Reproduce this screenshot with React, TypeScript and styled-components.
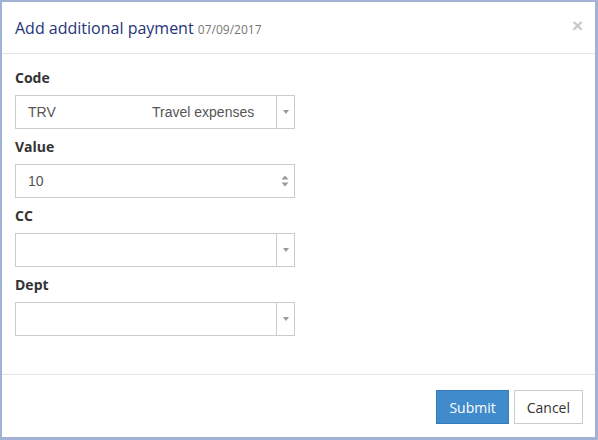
import React from 'react';
import styled, { createGlobalStyle } from 'styled-components';

const GlobalStyle = createGlobalStyle`
  * { box-sizing: border-box; }
  body {
    margin: 0;
    background: #ffffff;
    font-family: 'Open Sans', 'Liberation Sans', Arial, sans-serif;
    color: #333333;
  }
`;

interface Field {
  label: string;
  kind: 'select' | 'number';
  code?: string;
  description?: string;
  value?: string;
}

const fields: Field[] = [
  { label: 'Code', kind: 'select', code: 'TRV', description: 'Travel expenses' },
  { label: 'Value', kind: 'number', value: '10' },
  { label: 'CC', kind: 'select' },
  { label: 'Dept', kind: 'select' },
];

const Caret = () => (
  <svg width="6" height="4" viewBox="0 0 6 4">
    <path d="M0 0 L6 0 L3 4 Z" fill="#999999" />
  </svg>
);

const Spinner = () => (
  <svg width="8" height="12" viewBox="0 0 8 12">
    <path d="M0.5 4.5 L4 0.5 L7.5 4.5 Z" fill="#9a9a9a" />
    <path d="M0.5 7.5 L4 11.5 L7.5 7.5 Z" fill="#9a9a9a" />
  </svg>
);

export default function App() {
  return (
    <>
      <GlobalStyle />
      <Modal>
        <Header>
          <Title>
            Add additional payment <DateText>07/09/2017</DateText>
          </Title>
          <CloseButton aria-label="Close">×</CloseButton>
        </Header>

        <Body>
          {fields.map((f) => (
            <FormGroup key={f.label}>
              <Label>{f.label}</Label>
              {f.kind === 'select' ? (
                <SelectBox>
                  <SelectValue>
                    <CodeCell>{f.code ?? ''}</CodeCell>
                    <span>{f.description ?? ''}</span>
                  </SelectValue>
                  <CaretCell>
                    <Caret />
                  </CaretCell>
                </SelectBox>
              ) : (
                <NumberBox>
                  <SelectValue>{f.value}</SelectValue>
                  <SpinCell>
                    <Spinner />
                  </SpinCell>
                </NumberBox>
              )}
            </FormGroup>
          ))}
        </Body>

        <Footer>
          <Button $primary>Submit</Button>
          <Button>Cancel</Button>
        </Footer>
      </Modal>
    </>
  );
}

const Modal = styled.div`
  width: 598px;
  height: 440px;
  display: flex;
  flex-direction: column;
  background: #ffffff;
  border-style: solid;
  border-color: #a2b2d5;
  border-width: 2px 3px 3px 2px;
`;

const Header = styled.div`
  height: 52px;
  flex-shrink: 0;
  display: flex;
  align-items: center;
  justify-content: space-between;
  padding: 0 12px 0 13px;
  border-bottom: 1px solid #e5e5e5;
`;

const Title = styled.h4`
  margin: 0;
  font-size: 16px;
  font-weight: 400;
  color: #1f3478;
`;

const DateText = styled.small`
  font-size: 12px;
  color: #777777;
`;

const CloseButton = styled.button`
  border: none;
  background: none;
  padding: 0;
  font-family: 'Liberation Sans', Arial, sans-serif;
  font-size: 19px;
  font-weight: 700;
  line-height: 1;
  color: #c8c8c8;
  margin-top: -4px;
`;

const Body = styled.div`
  flex: 1;
  padding: 15px 12px 0 13px;
`;

const FormGroup = styled.div`
  margin-bottom: 9px;
`;

const Label = styled.label`
  display: block;
  font-size: 14px;
  font-weight: 700;
  line-height: 18px;
  margin-bottom: 8px;
  color: #333333;
`;

const SelectBox = styled.div`
  width: 280px;
  height: 34px;
  display: flex;
  border: 1px solid #cccccc;
  background: #ffffff;
`;

const NumberBox = styled(SelectBox)``;

const SelectValue = styled.div`
  flex: 1;
  display: flex;
  align-items: center;
  padding-left: 12px;
  font-family: 'Liberation Sans', Arial, sans-serif;
  font-size: 14px;
  color: #555555;
`;

const CodeCell = styled.span`
  width: 124px;
`;

const CaretCell = styled.div`
  width: 18px;
  display: flex;
  align-items: center;
  justify-content: center;
  border-left: 1px solid #cccccc;
`;

const SpinCell = styled.div`
  width: 18px;
  display: flex;
  align-items: center;
  justify-content: center;
`;

const Footer = styled.div`
  flex-shrink: 0;
  display: flex;
  justify-content: flex-end;
  gap: 5px;
  padding: 15px 12px 13px 13px;
  border-top: 1px solid #e5e5e5;
`;

const Button = styled.button<{ $primary?: boolean }>`
  height: 34px;
  padding: 0 12px;
  font-family: 'Open Sans', 'Liberation Sans', Arial, sans-serif;
  font-size: 14px;
  border: 1px solid ${(p) => (p.$primary ? '#357ebd' : '#cccccc')};
  background: ${(p) => (p.$primary ? '#3f8bcb' : '#ffffff')};
  color: ${(p) => (p.$primary ? '#ffffff' : '#333333')};
  border-radius: 0;
`;
